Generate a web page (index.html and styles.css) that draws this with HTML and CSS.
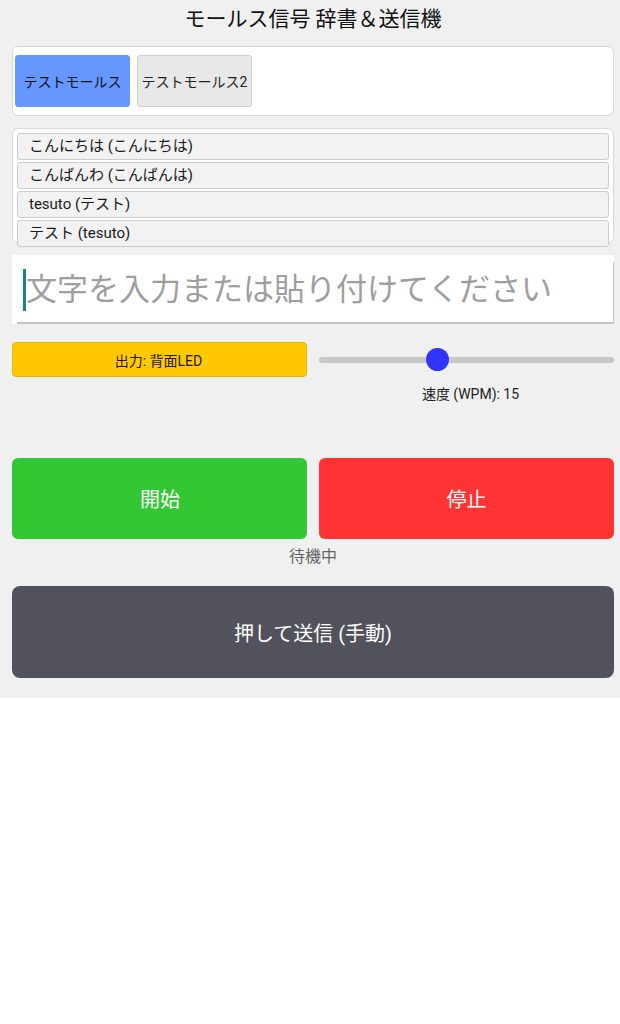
FILE: index.html
```html
<!DOCTYPE html>
<html lang="ja">
<head>
<meta charset="utf-8">
<title>モールス信号 辞書＆送信機</title>
<link rel="stylesheet" href="styles.css">
</head>
<body>
<div class="app">
  <h1 class="title">モールス信号 辞書＆送信機</h1>

  <div class="tabs">
    <button class="tab tab-active">テストモールス</button>
    <button class="tab">テストモールス2</button>
  </div>

  <div class="dict">
    <div class="dict-item">こんにちは (こんにちは)</div>
    <div class="dict-item">こんばんわ (こんばんは)</div>
    <div class="dict-item">tesuto (テスト)</div>
    <div class="dict-item">テスト (tesuto)</div>
  </div>

  <div class="input-wrap">
    <div class="input-line">
      <span class="caret"></span><span class="placeholder">文字を入力または貼り付けてください</span>
    </div>
  </div>

  <div class="controls">
    <button class="output-btn">出力: 背面LED</button>
    <div class="speed">
      <div class="slider">
        <div class="track"></div>
        <div class="thumb" style="left: calc(40% - 11px)"></div>
      </div>
      <div class="speed-label">速度 (WPM): 15</div>
    </div>
  </div>

  <div class="actions">
    <button class="action start">開始</button>
    <button class="action stop">停止</button>
  </div>

  <div class="status">待機中</div>

  <button class="manual">押して送信 (手動)</button>
</div>
</body>
</html>
```

FILE: styles.css
```css
* { box-sizing: border-box; }

html, body {
  margin: 0;
  padding: 0;
  background: #ffffff;
}

body {
  font-family: Roboto, "Noto Sans CJK JP", "Noto Sans", sans-serif;
  color: #1a1a1a;
}

.app {
  background: #f0f0f0;
  padding: 0 6px 20px 12px;
}

.title {
  margin: 0;
  padding: 7px 0 15px;
  font-size: 21px;
  line-height: 24px;
  font-weight: 400;
  text-align: center;
  color: #111;
}

button {
  font-family: inherit;
  cursor: pointer;
}

.tabs {
  display: flex;
  gap: 7px;
  background: #fff;
  border: 1px solid #d8d8d8;
  border-radius: 6px;
  padding: 8px 2px;
}

.tab {
  height: 52px;
  width: 115px;
  border: 1px solid #cfcfcf;
  border-radius: 3px;
  background: #e8e8e8;
  font-size: 14px;
  color: #222;
  padding: 0;
}

.tab-active {
  background: #6597ff;
  border-color: #6597ff;
  color: #111;
}

.dict {
  margin-top: 12px;
  height: 115px;
  background: #fff;
  border: 1px solid #d8d8d8;
  border-radius: 6px;
  padding: 4px;
}

.dict-item {
  height: 27px;
  margin-bottom: 2px;
  background: #f2f2f2;
  border: 1px solid #cccccc;
  border-radius: 3px;
  padding-left: 11px;
  font-size: 15px;
  line-height: 25px;
  color: #1a1a1a;
}

.input-wrap {
  margin-top: 12px;
  height: 69px;
  background: #fff;
  padding: 7px 0 0 0;
}

.input-line {
  height: 62px;
  margin-left: 5px;
  border-bottom: 2px solid #c4c4c4;
  border-right: 1px solid #c4c4c4;
  display: flex;
  align-items: center;
  padding-left: 6px;
  padding-bottom: 4px;
}

.caret {
  display: inline-block;
  width: 3px;
  height: 42px;
  background: #148a74;
}

.placeholder {
  font-size: 31px;
  color: #9e9e9e;
  line-height: 42px;
}

.controls {
  margin-top: 18px;
  display: grid;
  grid-template-columns: 1fr 1fr;
  gap: 12px;
  align-items: start;
}

.output-btn {
  height: 35px;
  background: #ffc800;
  border: 1px solid #e8b800;
  border-radius: 4px;
  font-size: 14px;
  color: #1a1a1a;
  padding-right: 8px;
}

.slider {
  position: relative;
  height: 35px;
  display: flex;
  align-items: center;
}

.track {
  width: 100%;
  height: 6px;
  background: #c8c8c8;
  border-radius: 3px;
}

.thumb {
  position: absolute;
  top: 6px;
  width: 23px;
  height: 23px;
  border-radius: 50%;
  background: #3333ff;
}

.speed-label {
  margin-top: 8px;
  padding-left: 8px;
  font-size: 14px;
  line-height: 18px;
  text-align: center;
  color: #222;
}

.actions {
  margin-top: 55px;
  display: grid;
  grid-template-columns: 1fr 1fr;
  gap: 12px;
}

.action {
  height: 81px;
  border: none;
  border-radius: 6px;
  font-size: 20px;
  color: #fff;
}

.start { background: #33c733; padding-right: 5px; }
.stop { background: #ff3333; padding-left: 6px; }

.status {
  margin-top: 8px;
  font-size: 16px;
  line-height: 20px;
  text-align: center;
  color: #666;
}

.manual {
  display: block;
  width: 100%;
  margin-top: 19px;
  height: 92px;
  border: none;
  border-radius: 8px;
  background: #52525c;
  color: #fff;
  font-size: 20px;
}
```
